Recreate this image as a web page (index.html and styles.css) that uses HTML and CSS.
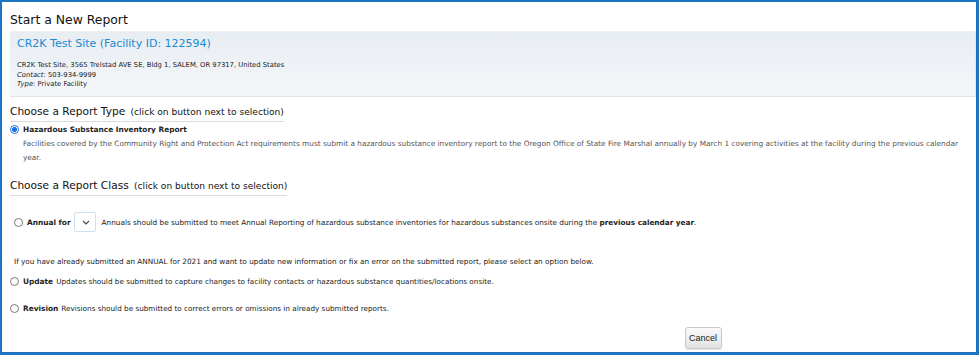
FILE: index.html
```html
<!DOCTYPE html>
<html lang="en">
<head>
    <meta charset="UTF-8">
    <title>Start a New Report</title>
    <link rel="stylesheet" href="styles.css">
</head>
<body>
    <div class="frame">
        <h1 class="title">Start a New Report</h1>

        <div class="facility">
            <div class="facName">CR2K Test Site (Facility ID: 122594)</div>
            <div class="facInfo">
                CR2K Test Site, 3565 Trelstad AVE SE, Bldg 1, SALEM, OR 97317, United States<br>
                <i>Contact:</i> 503-934-9999<br>
                <i>Type:</i> Private Facility
            </div>
        </div>

        <h2 class="section">Choose a Report Type <span class="hint">(click on button next to selection)</span></h2>
        <div class="typeRow">
            <span class="radio checked"></span>
            <div>
                <div class="typeLabel">Hazardous Substance Inventory Report</div>
                <div class="typeDesc">Facilities covered by the Community Right and Protection Act requirements must submit a hazardous substance inventory report to the Oregon Office of State Fire Marshal annually by March 1 covering activities at the facility during the previous calendar year.</div>
            </div>
        </div>

        <h2 class="section classHead">Choose a Report Class <span class="hint">(click on button next to selection)</span></h2>
        <div class="annualRow">
            <span class="radio"></span>
            <b class="optName">Annual for</b>
            <span class="yearSelect">
                <svg width="8" height="5" viewBox="0 0 8 5"><path d="M1 1l3 3 3-3" fill="none" stroke="#444" stroke-width="1.1"/></svg>
            </span>
            <span class="optText">Annuals should be submitted to meet Annual Reporting of hazardous substance inventories for hazardous substances onsite during the <b>previous calendar year</b>.</span>
        </div>

        <p class="note">If you have already submitted an ANNUAL for 2021 and want to update new information or fix an error on the submitted report, please select an option below.</p>

        <div class="optRow">
            <span class="radio"></span>
            <b class="optName">Update</b>
            <span class="optText">Updates should be submitted to capture changes to facility contacts or hazardous substance quantities/locations onsite.</span>
        </div>
        <div class="optRow revision">
            <span class="radio"></span>
            <b class="optName">Revision</b>
            <span class="optText">Revisions should be submitted to correct errors or omissions in already submitted reports.</span>
        </div>

        <div class="actions">
            <button class="cancel">Cancel</button>
        </div>
    </div>
</body>
</html>
```

FILE: styles.css
```css
*{
    margin:0;
    padding:0;
    box-sizing:border-box;
}

body{
    font-family:"DejaVu Sans", Verdana, sans-serif;
    color:#222;
    background:#fff;
}

.frame{
    width:979px;
    height:355px;
    border:2px solid #1c74c4;
    border-right-width:3px;
    border-bottom-width:3px;
    padding:0 0 0 8px;
    overflow:hidden;
}

.title{
    font-weight:normal;
    font-size:12.4px;
    color:#111;
    margin-top:9px;
    line-height:18px;
}

.facility{
    margin-top:2px;
    height:66px;
    background:linear-gradient(#e8edf2, #f4f7fa);
    border-top:1px solid #eef1f4;
    border-bottom:1px solid #e2e5e8;
    border-right:1px solid #e4e7ea;
    padding:4px 0 0 7px;
}
.facName{
    color:#1a8bd0;
    font-size:11px;
    line-height:16px;
}
.facInfo{
    margin-top:9px;
    font-size:6.8px;
    line-height:9.6px;
    color:#222;
}

.section{
    font-weight:normal;
    font-size:10.6px;
    color:#111;
    display:inline-block;
    margin-top:7px;
    padding-bottom:1px;
    border-bottom:1px solid #dcdcdc;
    line-height:15px;
}
.hint{
    font-size:9.1px;
    padding-left:2px;
}

.radio{
    display:inline-block;
    flex:none;
    width:9px;
    height:9px;
    border:1px solid #777;
    border-radius:50%;
    background:#fff;
}
.radio.checked{
    border:1px solid #1a73e8;
    background:radial-gradient(circle, #1a73e8 0 2.2px, #fff 2.6px);
}

.typeRow{
    display:flex;
    gap:4px;
    margin-top:2px;
}
.typeRow .radio{
    margin-top:1px;
}
.typeLabel{
    font-weight:bold;
    font-size:7.4px;
    line-height:11px;
}
.typeDesc{
    color:#555;
    font-size:7.35px;
    line-height:14px;
    margin-top:2px;
    padding-right:8px;
}

.classHead{
    margin-top:13px;
}

.annualRow{
    display:flex;
    align-items:center;
    margin:16px 0 0 4px;
    font-size:7.3px;
}
.annualRow .radio{
    margin-right:4px;
}
.optName{
    font-size:7.4px;
    margin-right:3px;
}
.yearSelect{
    display:flex;
    align-items:center;
    justify-content:flex-end;
    width:22px;
    height:20px;
    border:1px solid #cfe0ee;
    border-radius:2px;
    padding-right:5px;
    margin-right:6px;
}

.note{
    font-size:7.3px;
    margin:24px 0 0 4px;
    line-height:11px;
}

.optRow{
    display:flex;
    align-items:center;
    height:11px;
    margin-top:9px;
    font-size:7.25px;
}
.optRow .radio{
    margin-right:4px;
}
.optRow .optName{
    margin-right:3px;
}
.revision{
    margin-top:16px;
}

.actions{
    display:flex;
    justify-content:center;
    padding-left:420px;
    margin-top:13px;
}
.cancel{
    width:37px;
    height:22px;
    font-family:"Liberation Sans", Arial, sans-serif;
    font-size:9px;
    color:#222;
    border:1px solid #c8c8c8;
    border-radius:3px;
    background:linear-gradient(#fafafa, #e2e2e2);
    box-shadow:0 1px 1px rgba(0,0,0,0.1);
}
```
